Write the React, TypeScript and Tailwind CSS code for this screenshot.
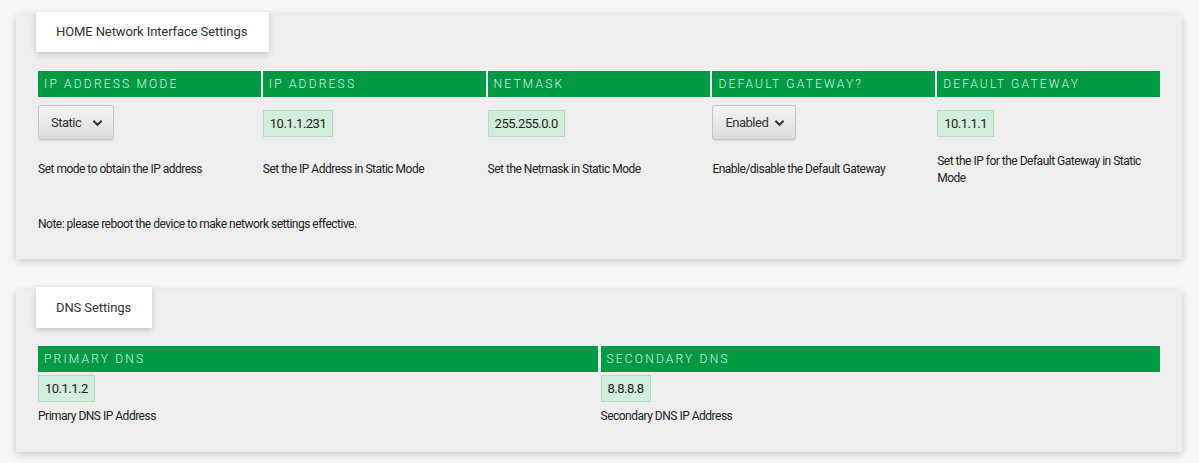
import React from 'react';

const font = { fontFamily: 'Roboto, "Liberation Sans", sans-serif' };

const Chevron = () => (
  <svg viewBox="0 0 12 8" className="w-[11px] h-[8px]" fill="none" stroke="#333" strokeWidth="2.2">
    <path d="M1.5 1.5 6 6l4.5-4.5" />
  </svg>
);

const Select = ({ value, width }: { value: string; width: string }) => (
  <div
    className={`${width} h-[35px] flex items-center justify-between pl-[12px] pr-[10px] rounded-[3px] border border-[#c4c4c4] bg-gradient-to-b from-[#f4f4f4] to-[#dcdcdc] shadow-[0_1px_1px_rgba(0,0,0,0.08)] text-[13px] tracking-[-0.5px] text-[#333]`}
  >
    <span>{value}</span>
    <Chevron />
  </div>
);

const Field = ({ value }: { value: string }) => (
  <div className="inline-block h-[27px] leading-[25px] px-[6px] bg-[#d1eddc] border border-[#b5d9c3] text-[13px] tracking-[-0.5px] text-[#222]">
    {value}
  </div>
);

const Head = ({ label }: { label: string }) => (
  <div className="h-[26px] leading-[26px] bg-[#009a44] text-[#dcf0e2] text-[12px] font-light tracking-[2.2px] pl-[6px] uppercase">
    {label}
  </div>
);

const Tab = ({ title, width }: { title: string; width: string }) => (
  <div
    className={`${width} -mt-[3px] ml-[20px] bg-white shadow-[0_2px_6px_rgba(0,0,0,0.18)] flex items-center pl-[20px] text-[13px] text-[#333] tracking-[-0.1px]`}
  >
    {title}
  </div>
);

type Col = { head: string; control: React.ReactNode; desc: string };

const cols: Col[] = [
  { head: 'IP Address Mode', control: <Select value="Static" width="w-[76px]" />, desc: 'Set mode to obtain the IP address' },
  { head: 'IP Address', control: <div className="pt-[5px]"><Field value="10.1.1.231" /></div>, desc: 'Set the IP Address in Static Mode' },
  { head: 'Netmask', control: <div className="pt-[5px]"><Field value="255.255.0.0" /></div>, desc: 'Set the Netmask in Static Mode' },
  { head: 'Default Gateway?', control: <Select value="Enabled" width="w-[84px]" />, desc: 'Enable/disable the Default Gateway' },
  { head: 'Default Gateway', control: <div className="pt-[5px]"><Field value="10.1.1.1" /></div>, desc: 'Set the IP for the Default Gateway in Static Mode' },
];

export default function App() {
  return (
    <div className="w-[1199px] h-[463px] bg-[#f7f7f7] pt-[15px] pl-[16px]" style={font}>
      <div className="flex flex-col w-[1166px] h-[244px] bg-[#eeeeee] shadow-[0_2px_8px_rgba(0,0,0,0.2)]">
        <Tab title="HOME Network Interface Settings" width="w-[233px] h-[40px]" />
        <div className="px-[22px] pt-[19px]">
          <div className="grid grid-cols-5 gap-x-[2px]">
            {cols.map((c) => (
              <div key={c.head} className="flex flex-col">
                <Head label={c.head} />
                <div className="h-[43px] pt-[8px]">{c.control}</div>
                <div className="mt-[12px] h-[35px] flex items-center text-[12px] leading-[17px] tracking-[-0.5px] text-[#222] pr-[6px]">
                  {c.desc}
                </div>
              </div>
            ))}
          </div>
          <div className="mt-[28px] text-[12px] tracking-[-0.5px] text-[#222]">
            Note: please reboot the device to make network settings effective.
          </div>
        </div>
      </div>

      <div className="flex flex-col mt-[31px] w-[1166px] h-[162px] bg-[#eeeeee] shadow-[0_2px_8px_rgba(0,0,0,0.2)]">
        <Tab title="DNS Settings" width="w-[116px] h-[41px]" />
        <div className="px-[22px] pt-[18px]">
          <div className="grid grid-cols-2 gap-x-[3px]">
            {[
              { head: 'Primary DNS', value: '10.1.1.2', desc: 'Primary DNS IP Address' },
              { head: 'Secondary DNS', value: '8.8.8.8', desc: 'Secondary DNS IP Address' },
            ].map((c) => (
              <div key={c.head} className="flex flex-col">
                <Head label={c.head} />
                <div className="pt-[3px]"><Field value={c.value} /></div>
                <div className="pt-[6px] text-[12px] leading-[17px] tracking-[-0.5px] text-[#222]">{c.desc}</div>
              </div>
            ))}
          </div>
        </div>
      </div>
    </div>
  );
}
